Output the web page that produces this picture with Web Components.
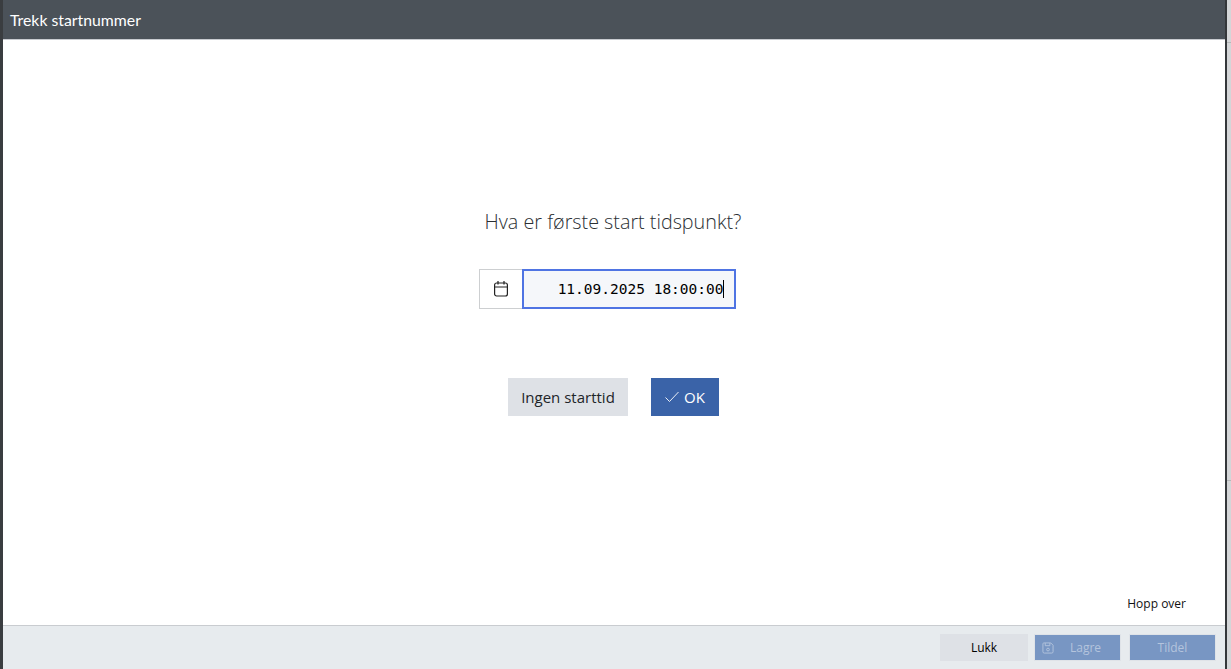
<!DOCTYPE html>
<html>
<head>
<meta charset="utf-8">
<title>Trekk startnummer</title>
<style>
  html, body { margin: 0; height: 100%; background: #d4d6d8; overflow: hidden; }
</style>
</head>
<body>
<app-window heading="Trekk startnummer"></app-window>

<script>
class TimeField extends HTMLElement {
    constructor() {
        super();
        this.attachShadow({ mode: 'open' });
    }

    connectedCallback() {
        this.shadowRoot.innerHTML = `
      <style>
        :host {
          display: flex;
          height: 40px;
          width: 257px;
          box-sizing: border-box;
        }
        .addon {
          width: 43px;
          box-sizing: border-box;
          border: 1px solid #cdcfd1;
          border-right: 0;
          display: flex;
          align-items: center;
          justify-content: center;
          background: #fff;
        }
        .value {
          flex: 1;
          box-sizing: border-box;
          border: 2px solid #4f74e3;
          background: #f5f7fa;
          color: #000;
          font: 500 14.5px/36px "DejaVu Sans Mono", monospace;
          padding-right: 10px;
          display: flex;
          justify-content: flex-end;
          white-space: pre;
        }
        .caret {
          width: 1px;
          height: 18px;
          background: #000;
          align-self: center;
          margin-left: -1px;
        }
      </style>
      <div class="addon">
        <svg width="16" height="18" viewBox="0 0 16 18" fill="none" stroke="#222" stroke-width="1.2">
          <rect x="1.6" y="3" width="12.8" height="13" rx="2"/>
          <path d="M1.6 7h12.8M5 1v3.4M11 1v3.4"/>
        </svg>
      </div>
      <div class="value"><span>${this.getAttribute('value')}</span><span class="caret"></span></div>
    `;
    }
}

class ActionButton extends HTMLElement {
    constructor() {
        super();
        this.attachShadow({ mode: 'open' });
    }

    connectedCallback() {
        this.shadowRoot.innerHTML = `
      <style>
        :host {
          display: inline-flex;
          align-items: center;
          justify-content: center;
          box-sizing: border-box;
          height: 38px;
          gap: 4px;
          font: 15px "Open Sans", "Noto Sans", sans-serif;
          background: #dee1e6;
          color: #212529;
        }
        :host([variant="primary"]) {
          background: #3a63a8;
          color: #fff;
        }
        :host([variant="footer"]) {
          height: 27px;
          font-size: 12px;
          color: #000;
        }
        :host([variant="disabled"]) {
          height: 27px;
          font-size: 12px;
          background: #7896c3;
          color: #b4c4dd;
          border: 1px solid #dfe3e8;
        }
      </style>
      <slot></slot>
    `;
    }
}

class AppWindow extends HTMLElement {
    constructor() {
        super();
        this.attachShadow({ mode: 'open' });
    }

    connectedCallback() {
        this.shadowRoot.innerHTML = `
      <style>
        :host {
          display: flex;
          width: 1231px;
          height: 669px;
          background: #d4d6d8;
        }
        .dialog {
          width: 1227px;
          height: 669px;
          box-sizing: border-box;
          border-left: 3px solid #3a3d40;
          border-right: 2px solid #34373a;
          display: flex;
          flex-direction: column;
          background: #fff;
        }
        .strip {
          flex: 1;
          background:
            linear-gradient(#b5b7b9, #b5b7b9) 0 42px / 100% 1px no-repeat,
            linear-gradient(#b5b7b9, #b5b7b9) 0 480px / 100% 1px no-repeat;
        }
        header {
          height: 40px;
          flex: none;
          box-sizing: border-box;
          background: #4b5259;
          border-bottom: 1px solid #c8cbd0;
          color: #fff;
          font: 15.8px/40px Lato, sans-serif;
          padding-left: 7px;
        }
        main {
          flex: 1;
          display: flex;
          flex-direction: column;
          align-items: center;
          min-height: 0;
        }
        h1 {
          margin: 167px 2px 0 0;
          font: 300 19.75px/30px "Open Sans", sans-serif;
          color: #2b2f33;
        }
        time-field {
          margin: 32px 14px 0 0;
        }
        .choices {
          margin: 69px 2px 0 0;
          display: flex;
          gap: 23px;
        }
        .choices action-button:first-child { width: 120px; padding-left: 1px; }
        .choices action-button:last-child { width: 68px; }
        .skip {
          margin-top: auto;
          align-self: flex-end;
          padding: 0 39px 12px 0;
          font: 12px/18px "Open Sans", sans-serif;
          color: #111;
        }
        footer {
          height: 44px;
          flex: none;
          box-sizing: border-box;
          border-top: 1px solid #c9ccd0;
          background: #e7ebee;
          display: flex;
          justify-content: flex-end;
          padding: 8px 9px 0 0;
        }
        footer action-button { width: 87px; margin-left: 8px; }
        footer action-button:first-child { width: 88px; }
        footer action-button:nth-child(2) { margin-left: 6px; justify-content: flex-start; padding-left: 7px; }
        .save { margin-right: 12px; }
      </style>
      <div class="dialog">
        <header>${this.getAttribute('heading')}</header>
        <main>
          <h1>Hva er første start tidspunkt?</h1>
          <time-field value="11.09.2025 18:00:00"></time-field>
          <div class="choices">
            <action-button>Ingen starttid</action-button>
            <action-button variant="primary">
              <svg width="16" height="12" viewBox="0 0 16 12" fill="none" stroke="#fff" stroke-width="0.9"><path d="M1.5 6.5l4 4 9-9.5"/></svg>
              OK
            </action-button>
          </div>
          <div class="skip">Hopp over</div>
        </main>
        <footer>
          <action-button variant="footer">Lukk</action-button>
          <action-button variant="disabled">
            <svg class="save" width="12" height="12" viewBox="0 0 13 13" fill="none" stroke="#b4c4dd" stroke-width="1"><path d="M2 1h7.5L12 3.5V10.5a1.5 1.5 0 0 1-1.5 1.5h-8A1.5 1.5 0 0 1 1 10.5V2a1 1 0 0 1 1-1z"/><path d="M3.5 1v3h5V1"/><circle cx="6.5" cy="8.2" r="1.5"/></svg>
            Lagre
          </action-button>
          <action-button variant="disabled">Tildel</action-button>
        </footer>
      </div>
      <div class="strip"></div>
    `;
    }
}

customElements.define('time-field', TimeField);
customElements.define('action-button', ActionButton);
customElements.define('app-window', AppWindow);
</script>
</body>
</html>
